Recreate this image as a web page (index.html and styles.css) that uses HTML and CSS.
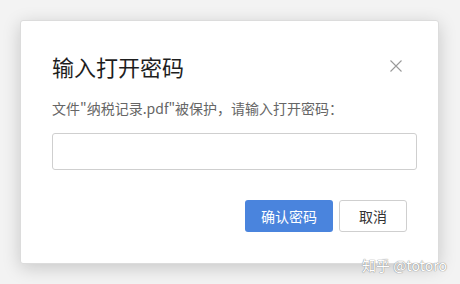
FILE: index.html
```html
<!DOCTYPE html>
<html lang="zh-CN">
<head>
    <meta charset="UTF-8">
    <meta name="viewport" content="width=device-width, initial-scale=1.0">
    <title>输入打开密码</title>
    <link rel="stylesheet" href="styles.css">
</head>
<body>
    <div class="dialog">
        <div class="dialog-header">
            <h1 class="dialog-title">输入打开密码</h1>
            <svg class="dialog-close" width="12" height="12" viewBox="0 0 12 12">
                <path d="M0.5 0.5L11.5 11.5M11.5 0.5L0.5 11.5" stroke="#9a9a9a" stroke-width="1.1" fill="none"/>
            </svg>
        </div>
        <p class="dialog-desc">文件"纳税记录.pdf"被保护，请输入打开密码：</p>
        <input class="dialog-input" type="password">
        <div class="dialog-actions">
            <button class="btn btn-primary">确认密码</button>
            <button class="btn btn-default">取消</button>
        </div>
    </div>
    <div class="watermark">知乎 @totoro</div>
</body>
</html>
```

FILE: styles.css
```css
* {
    margin: 0;
    padding: 0;
    box-sizing: border-box;
}

body {
    width: 460px;
    height: 284px;
    overflow: hidden;
    position: relative;
    background-color: #f3f3f3;
    font-family: "Noto Sans CJK SC", "Noto Sans", sans-serif;
}

.dialog {
    display: flex;
    flex-direction: column;
    margin: 20px 0 0 20px;
    width: 419px;
    height: 244px;
    padding: 34px 21px 31px 31px;
    background-color: #fff;
    border: 1px solid #dcdcdc;
    border-radius: 3px;
    box-shadow: 0 4px 18px rgba(0, 0, 0, 0.18);
}

.dialog-header {
    display: flex;
    justify-content: space-between;
    align-items: center;
    height: 22px;
}

.dialog-title {
    font-size: 22px;
    font-weight: normal;
    line-height: 22px;
    color: #1e1e1e;
}

.dialog-close {
    margin-right: 15px;
}

.dialog-desc {
    margin-top: 21px;
    font-size: 14px;
    line-height: 20px;
    color: #666;
}

.dialog-input {
    margin-top: 15px;
    width: 100%;
    height: 38px;
    border: 1px solid #cfcfcf;
    border-radius: 3px;
    outline: none;
}

.dialog-actions {
    display: flex;
    justify-content: flex-end;
    gap: 6px;
    margin-top: 30px;
    padding-right: 10px;
}

.btn {
    height: 32px;
    border-radius: 3px;
    font-family: inherit;
    font-size: 14px;
}

.btn-primary {
    width: 88px;
    border: none;
    background-color: #4a84dd;
    color: #fff;
}

.btn-default {
    width: 68px;
    border: 1px solid #cfcfcf;
    background-color: #fff;
    color: #333;
}

.watermark {
    position: absolute;
    left: 362px;
    top: 255px;
    font-size: 14px;
    line-height: 20px;
    color: #fff;
    text-shadow: 0 0 1px #888, 0 0 1px #888;
}
```
